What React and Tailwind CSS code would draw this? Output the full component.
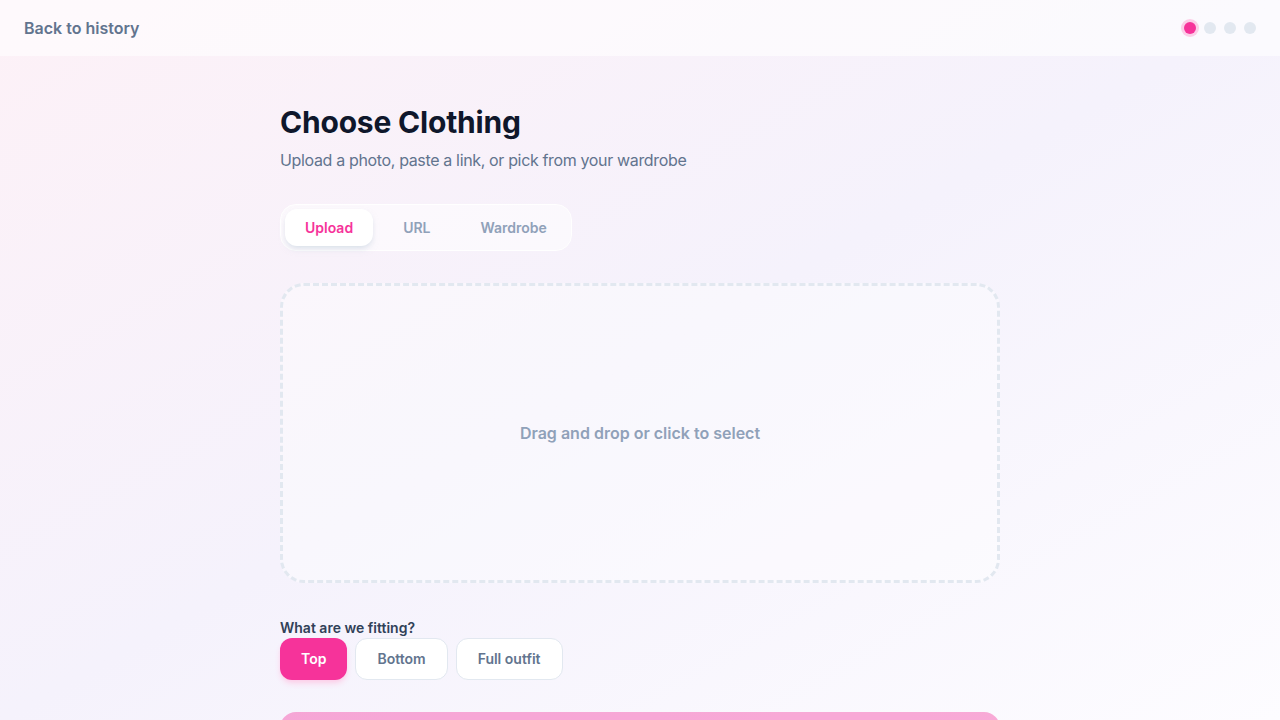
import React from 'react';

const tabs = ['Upload', 'URL', 'Wardrobe'];
const kinds = ['Top', 'Bottom', 'Full outfit'];

const App = () => {
  return (
    <div
      className="min-h-screen h-[720px] overflow-hidden bg-linear-to-br from-[#fdf1f7] via-[#f5f2fc] to-[#fdfcff] text-slate-900"
      style={{ fontFamily: 'Inter, "Noto Sans", sans-serif' }}
    >
      <header className="h-14 px-6 flex items-center justify-between bg-white/60">
        <button className="text-base font-semibold text-slate-500">Back to history</button>
        <div className="flex items-center gap-2">
          <span className="w-3 h-3 rounded-full bg-pink-500 ring-[3px] ring-pink-200" />
          <span className="w-3 h-3 rounded-full bg-slate-200" />
          <span className="w-3 h-3 rounded-full bg-slate-200" />
          <span className="w-3 h-3 rounded-full bg-slate-200" />
        </div>
      </header>

      <main className="w-[720px] mx-auto pt-12">
        <h1 className="text-3xl font-bold tracking-[-0.2px] text-slate-900">Choose Clothing</h1>
        <p className="mt-2 text-base tracking-[-0.35px] text-slate-500">Upload a photo, paste a link, or pick from your wardrobe</p>

        <div className="mt-8 inline-flex gap-[10px] p-[4px] rounded-2xl bg-white/50 border border-white">
          {tabs.map((t, i) => (
            <button
              key={t}
              className={
                i === 0
                  ? 'h-[37px] px-5 rounded-xl bg-white text-sm font-semibold text-pink-500 shadow-md shadow-slate-300/50'
                  : 'h-[37px] px-5 rounded-xl text-sm font-semibold text-slate-400'
              }
            >
              {t}
            </button>
          ))}
        </div>

        <div className="mt-8 h-[300px] rounded-3xl border-[3px] border-dashed border-slate-200 bg-white/40 flex items-center justify-center">
          <span className="text-base font-semibold text-slate-400">Drag and drop or click to select</span>
        </div>

        <p className="mt-[35px] text-sm font-semibold text-slate-700">What are we fitting?</p>
        <div className="flex gap-2">
          {kinds.map((k, i) => (
            <button
              key={k}
              className={
                i === 0
                  ? 'h-[42px] px-[21px] rounded-xl bg-pink-500 text-sm font-semibold text-white shadow-md shadow-pink-200'
                  : 'h-[42px] px-[21px] rounded-xl bg-white border border-slate-200 text-sm font-semibold text-slate-500'
              }
            >
              {k}
            </button>
          ))}
        </div>

        <button className="mt-8 w-full h-16 rounded-2xl bg-pink-500/40" />
      </main>
    </div>
  );
};

export default App;
